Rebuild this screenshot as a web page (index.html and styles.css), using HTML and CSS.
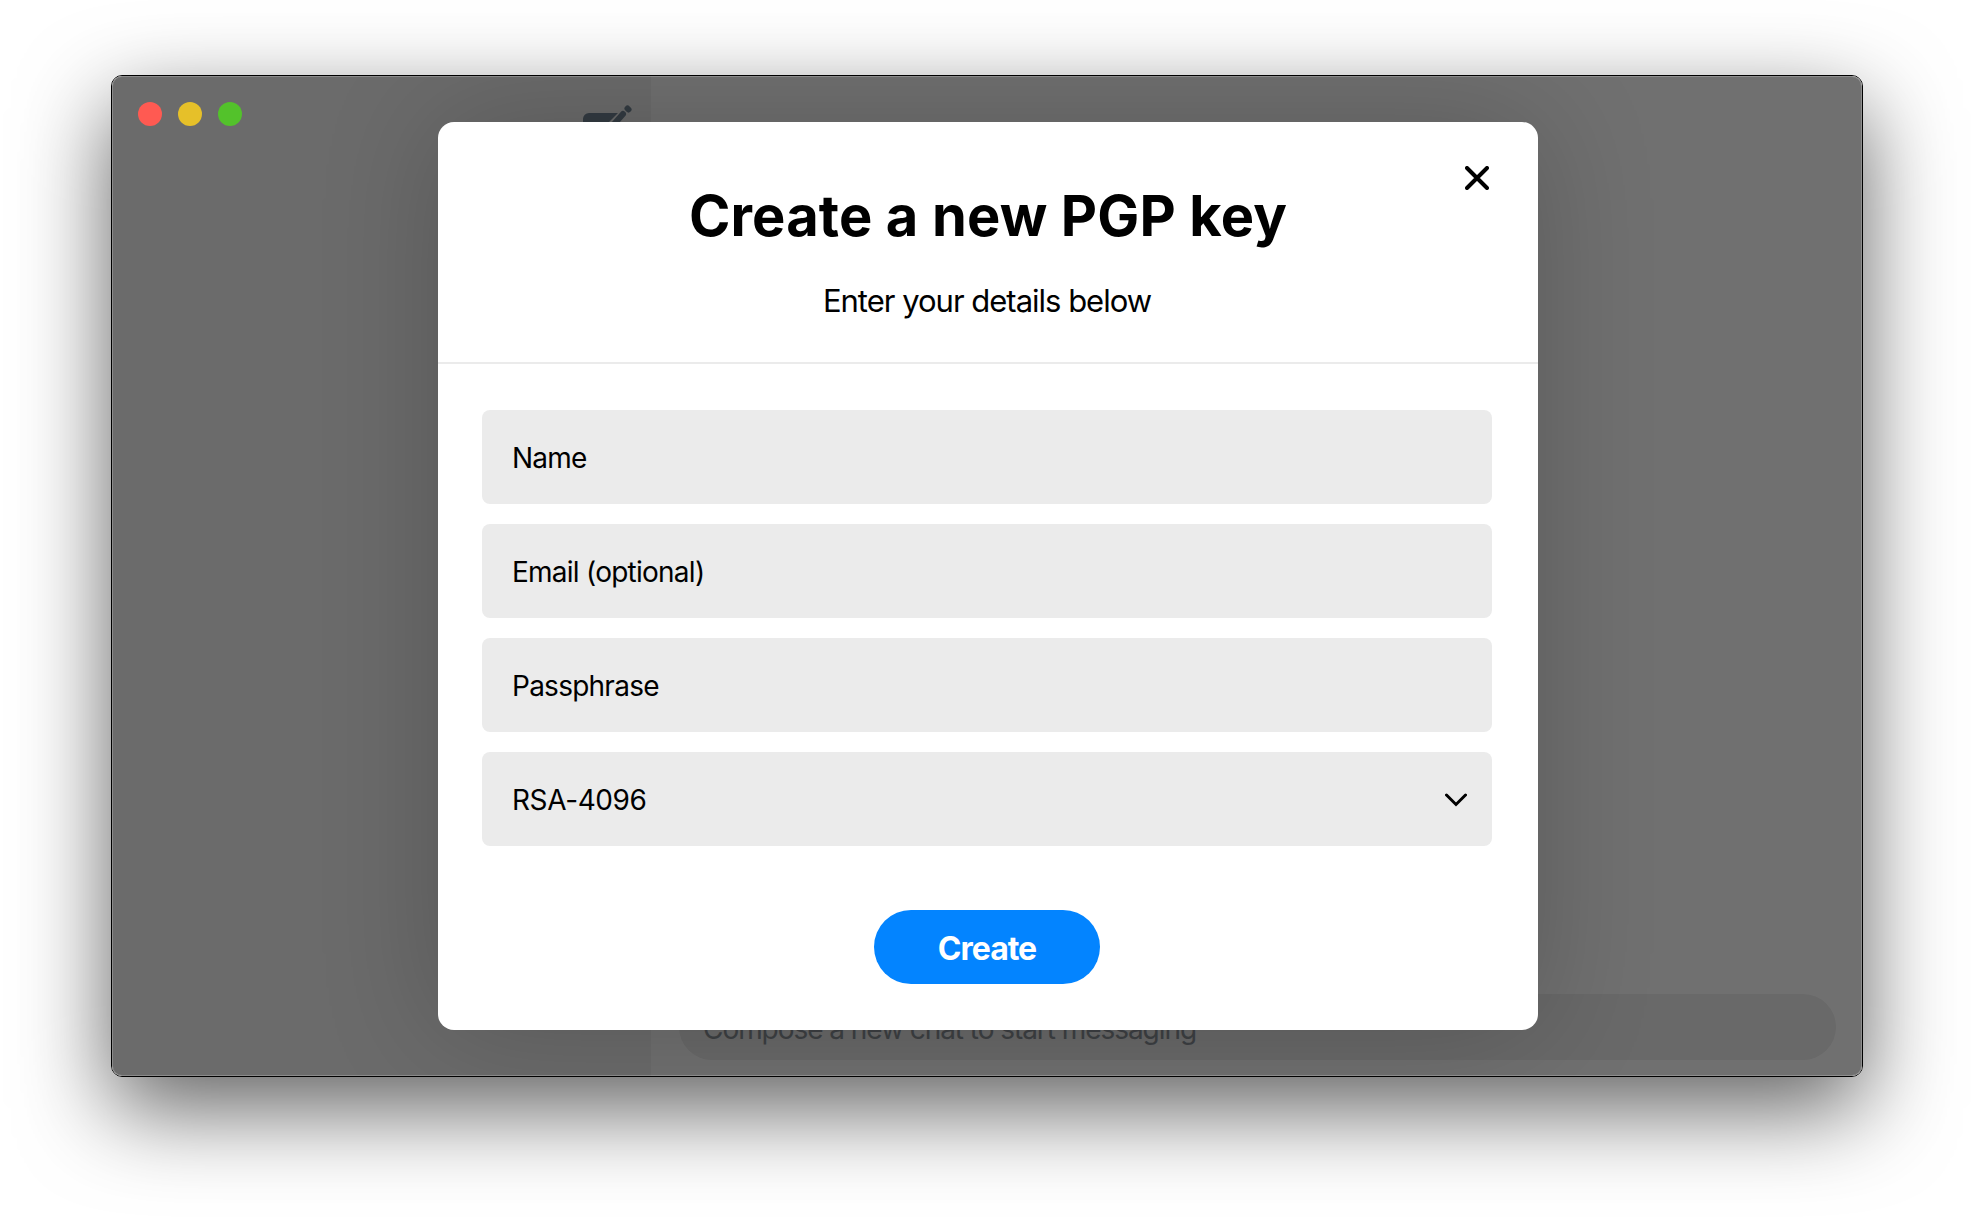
FILE: index.html
```html
<!DOCTYPE html>
<html lang="en">
<head>
<meta charset="utf-8">
<title>Create a new PGP key</title>
<link rel="stylesheet" href="styles.css">
</head>
<body>
<div class="window">
  <aside class="sidebar">
    <div class="sidebar-top">
      <svg class="compose-icon" width="52" height="44" viewBox="0 0 52 44">
        <path class="compose-body" d="M8 8h29L24 21v11h11l6-6v10a6 6 0 0 1-6 6H8a6 6 0 0 1-6-6V14a6 6 0 0 1 6-6z"/>
        <path class="compose-pen" d="M27 26 42 9"/>
        <path class="compose-tip" d="M46.500 3.500 47.500 4.500"/>
      </svg>
    </div>
  </aside>
  <main class="chat">
    <div class="composer">Compose a new chat to start messaging</div>
  </main>
  <div class="overlay">
    <section class="modal">
      <button class="close" aria-label="Close">
        <svg width="24" height="24" viewBox="0 0 24 24"><path d="M2 2 22 22M22 2 2 22"/></svg>
      </button>
      <header class="modal-head">
        <h1>Create a new PGP key</h1>
        <p>Enter your details below</p>
      </header>
      <form class="modal-form">
        <div class="fields">
          <input class="field" type="text" placeholder="Name">
          <input class="field" type="text" placeholder="Email (optional)">
          <input class="field" type="text" placeholder="Passphrase">
          <div class="select-wrap">
            <select class="field">
              <option>RSA-4096</option>
            </select>
            <svg class="chevron" width="22" height="14" viewBox="0 0 22 14"><path d="M1.500 2 11 11.500 20.500 2"/></svg>
          </div>
        </div>
        <button class="create" type="button">Create</button>
      </form>
    </section>
  </div>
  <div class="lights">
    <span class="light red"></span>
    <span class="light yellow"></span>
    <span class="light green"></span>
  </div>
</div>
</body>
</html>
```

FILE: styles.css
```css
* {
  box-sizing: border-box;
}

html,
body {
  margin: 0;
  height: 100%;
  background: #fff;
  overflow: hidden;
}

body {
  padding: 75px 111px 147px;
  font-family: Inter, "Liberation Sans", sans-serif;
  color: #000;
}

.window {
  position: relative;
  display: flex;
  height: 100%;
  border: 1px solid #000;
  border-radius: 11px;
  overflow: hidden;
  box-shadow: 0 32px 90px rgba(0, 0, 0, 0.62);
}

.window::after {
  content: "";
  position: absolute;
  inset: 0;
  border: 1px solid rgba(255, 255, 255, 0.22);
  border-radius: 10px;
  pointer-events: none;
}

.sidebar {
  width: 539px;
  flex: none;
  background: #f4f4f4;
}

.sidebar-top {
  display: flex;
  justify-content: flex-end;
  padding: 26px 18px 0 26px;
}

.lights {
  position: absolute;
  top: 26px;
  left: 26px;
  z-index: 2;
  display: flex;
  gap: 16px;
}

.light {
  width: 24px;
  height: 24px;
  border-radius: 50%;
}

.red { background: #ff5a52; }
.yellow { background: #e6c029; }
.green { background: #53c22b; }

.compose-icon {
  margin-top: 3px;
  fill: none;
}

.compose-body {
  fill: #748696;
}

.compose-pen,
.compose-tip {
  stroke: #748696;
  stroke-width: 6;
  stroke-linecap: round;
}

.chat {
  flex: 1;
  display: flex;
  flex-direction: column;
  justify-content: flex-end;
  padding: 0 26px 16px 28px;
  background: #fff;
}

.composer {
  height: 66px;
  padding: 2px 24px 0;
  border-radius: 33px;
  background: #eeeeee;
  color: #8c929a;
  font-size: 28px;
  line-height: 66px;
  letter-spacing: -1.05px;
}

.overlay {
  position: absolute;
  inset: 0;
  display: flex;
  align-items: center;
  justify-content: center;
  padding-left: 2px;
  background: rgba(0, 0, 0, 0.56);
}

.modal {
  position: relative;
  width: 1100px;
  height: 908px;
  border-radius: 16px;
  background: #fff;
  box-shadow: 0 0 120px rgba(0, 0, 0, 0.2);
}

.close {
  position: absolute;
  top: 44px;
  right: 49px;
  display: flex;
  padding: 0;
  border: 0;
  background: none;
}

.close path {
  fill: none;
  stroke: #000;
  stroke-width: 4;
  stroke-linecap: round;
}

.modal-head {
  height: 242px;
  padding-top: 60px;
  border-bottom: 2px solid #ebebeb;
  text-align: center;
}

.modal-head h1 {
  margin: 0;
  font-size: 56px;
  line-height: 68px;
  font-weight: 700;
  letter-spacing: 0.15px;
}

.modal-head p {
  margin: 31px 2px 0 0;
  font-size: 31px;
  line-height: 40px;
  letter-spacing: -1px;
}

.modal-form {
  display: flex;
  flex-direction: column;
  align-items: center;
  gap: 64px;
  padding: 46px 46px 0 44px;
}

.fields {
  display: flex;
  flex-direction: column;
  gap: 20px;
  width: 100%;
}

.field {
  display: block;
  width: 100%;
  height: 94px;
  padding: 2px 30px 0;
  border: 0;
  border-radius: 8px;
  outline: 0;
  background: #ebebeb;
  color: #000;
  font-family: inherit;
  font-size: 28px;
  letter-spacing: -0.75px;
  appearance: none;
}

select.field {
  letter-spacing: -0.4px;
}

.field::placeholder {
  color: #000;
  opacity: 1;
}

.select-wrap {
  position: relative;
}

.chevron {
  position: absolute;
  top: 41px;
  right: 25px;
  pointer-events: none;
}

.chevron path {
  fill: none;
  stroke: #000;
  stroke-width: 3;
  stroke-linecap: round;
}

.create {
  width: 226px;
  height: 74px;
  padding-top: 4px;
  border: 0;
  border-radius: 37px;
  background: #0384ff;
  color: #fff;
  font-family: inherit;
  font-size: 32px;
  font-weight: 700;
  letter-spacing: -1px;
}
```
